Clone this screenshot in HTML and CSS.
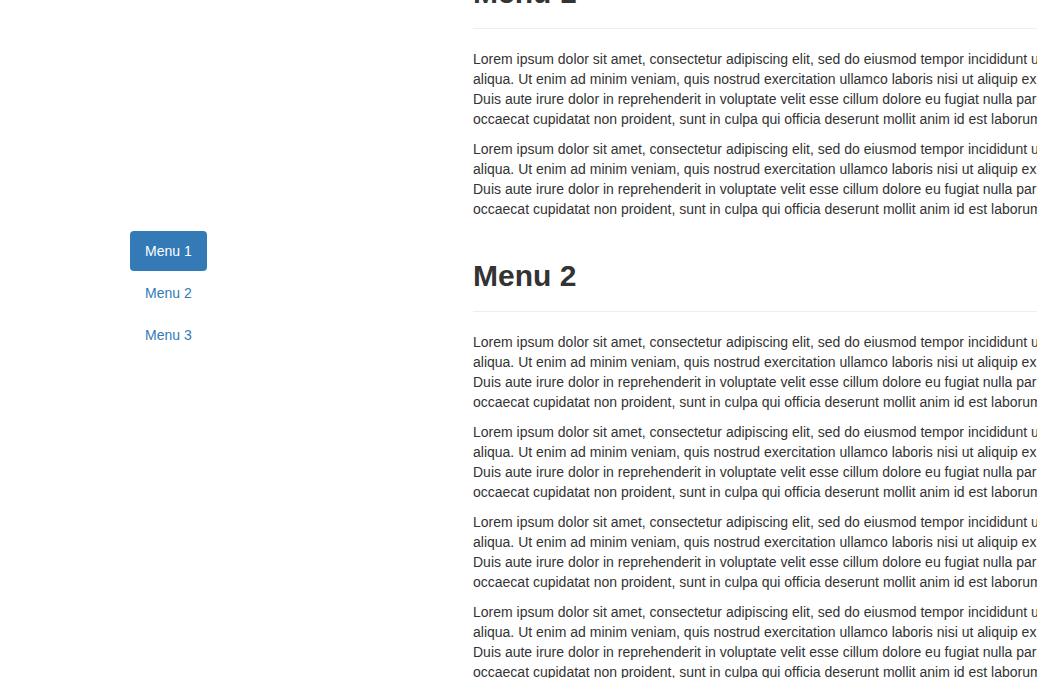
FILE: index.html
```html
<!DOCTYPE html>
<html lang="en">
<head>
<meta charset="utf-8">
<title>Scrollspy</title>
<link rel="stylesheet" href="styles.css">
</head>
<body>
<div class="page">
  <aside class="sidebar">
    <ul class="nav-pills">
      <li class="active"><a href="#menu1">Menu 1</a></li>
      <li><a href="#menu2">Menu 2</a></li>
      <li><a href="#menu3">Menu 3</a></li>
    </ul>
  </aside>
  <main class="content">
    <section class="section first" id="menu1">
      <div class="page-header"><h2>Menu 1</h2></div>
      <p>Lorem ipsum dolor sit amet, consectetur adipiscing elit, sed do eiusmod tempor incididunt ut labore et dolore magna aliqua. Ut enim ad minim veniam, quis nostrud exercitation ullamco laboris nisi ut aliquip ex ea commodo consequat. Duis aute irure dolor in reprehenderit in voluptate velit esse cillum dolore eu fugiat nulla pariatur. Excepteur sint occaecat cupidatat non proident, sunt in culpa qui officia deserunt mollit anim id est laborum.</p>
      <p>Lorem ipsum dolor sit amet, consectetur adipiscing elit, sed do eiusmod tempor incididunt ut labore et dolore magna aliqua. Ut enim ad minim veniam, quis nostrud exercitation ullamco laboris nisi ut aliquip ex ea commodo consequat. Duis aute irure dolor in reprehenderit in voluptate velit esse cillum dolore eu fugiat nulla pariatur. Excepteur sint occaecat cupidatat non proident, sunt in culpa qui officia deserunt mollit anim id est laborum.</p>
    </section>
    <section class="section" id="menu2">
      <div class="page-header"><h2>Menu 2</h2></div>
      <p>Lorem ipsum dolor sit amet, consectetur adipiscing elit, sed do eiusmod tempor incididunt ut labore et dolore magna aliqua. Ut enim ad minim veniam, quis nostrud exercitation ullamco laboris nisi ut aliquip ex ea commodo consequat. Duis aute irure dolor in reprehenderit in voluptate velit esse cillum dolore eu fugiat nulla pariatur. Excepteur sint occaecat cupidatat non proident, sunt in culpa qui officia deserunt mollit anim id est laborum.</p>
      <p>Lorem ipsum dolor sit amet, consectetur adipiscing elit, sed do eiusmod tempor incididunt ut labore et dolore magna aliqua. Ut enim ad minim veniam, quis nostrud exercitation ullamco laboris nisi ut aliquip ex ea commodo consequat. Duis aute irure dolor in reprehenderit in voluptate velit esse cillum dolore eu fugiat nulla pariatur. Excepteur sint occaecat cupidatat non proident, sunt in culpa qui officia deserunt mollit anim id est laborum.</p>
      <p>Lorem ipsum dolor sit amet, consectetur adipiscing elit, sed do eiusmod tempor incididunt ut labore et dolore magna aliqua. Ut enim ad minim veniam, quis nostrud exercitation ullamco laboris nisi ut aliquip ex ea commodo consequat. Duis aute irure dolor in reprehenderit in voluptate velit esse cillum dolore eu fugiat nulla pariatur. Excepteur sint occaecat cupidatat non proident, sunt in culpa qui officia deserunt mollit anim id est laborum.</p>
      <p>Lorem ipsum dolor sit amet, consectetur adipiscing elit, sed do eiusmod tempor incididunt ut labore et dolore magna aliqua. Ut enim ad minim veniam, quis nostrud exercitation ullamco laboris nisi ut aliquip ex ea commodo consequat. Duis aute irure dolor in reprehenderit in voluptate velit esse cillum dolore eu fugiat nulla pariatur. Excepteur sint occaecat cupidatat non proident, sunt in culpa qui officia deserunt mollit anim id est laborum.</p>
      <p>Lorem ipsum dolor sit amet, consectetur adipiscing elit, sed do eiusmod tempor incididunt ut labore et dolore magna aliqua. Ut enim ad minim veniam, quis nostrud exercitation ullamco laboris nisi ut aliquip ex ea commodo consequat. Duis aute irure dolor in reprehenderit in voluptate velit esse cillum dolore eu fugiat nulla pariatur. Excepteur sint occaecat cupidatat non proident, sunt in culpa qui officia deserunt mollit anim id est laborum.</p>
    </section>
  </main>
</div>
</body>
</html>
```

FILE: styles.css
```css
html, body {
  margin: 0;
  padding: 0;
  background: #fff;
  overflow: hidden;
}

body {
  font-family: "Liberation Sans", Arial, Helvetica, sans-serif;
  font-size: 14px;
  line-height: 20px;
  color: #333;
}

.page {
  display: flex;
  align-items: flex-start;
  width: 1240px;
  height: 678px;
  overflow: hidden;
}

.sidebar {
  flex: 0 0 473px;
  box-sizing: border-box;
  padding: 231px 0 0 130px;
}

.nav-pills {
  list-style: none;
  margin: 0;
  padding: 0;
  display: flex;
  flex-direction: column;
  align-items: flex-start;
  gap: 2px;
}

.nav-pills a {
  display: block;
  padding: 10px 15px;
  border-radius: 4px;
  color: #337ab7;
  text-decoration: none;
}

.nav-pills .active a {
  background: #337ab7;
  color: #fff;
}

.content {
  flex: 0 0 732px;
}

.page-header {
  margin: 40px 0 20px;
  padding-bottom: 9px;
  border-bottom: 1px solid #eee;
}

.section.first .page-header {
  margin-top: -24px;
}

.page-header h2 {
  margin: 0 0 10px;
  font-size: 30px;
  line-height: 33px;
  font-weight: 700;
  color: #333;
}

p {
  margin: 0 0 10px;
}
```
